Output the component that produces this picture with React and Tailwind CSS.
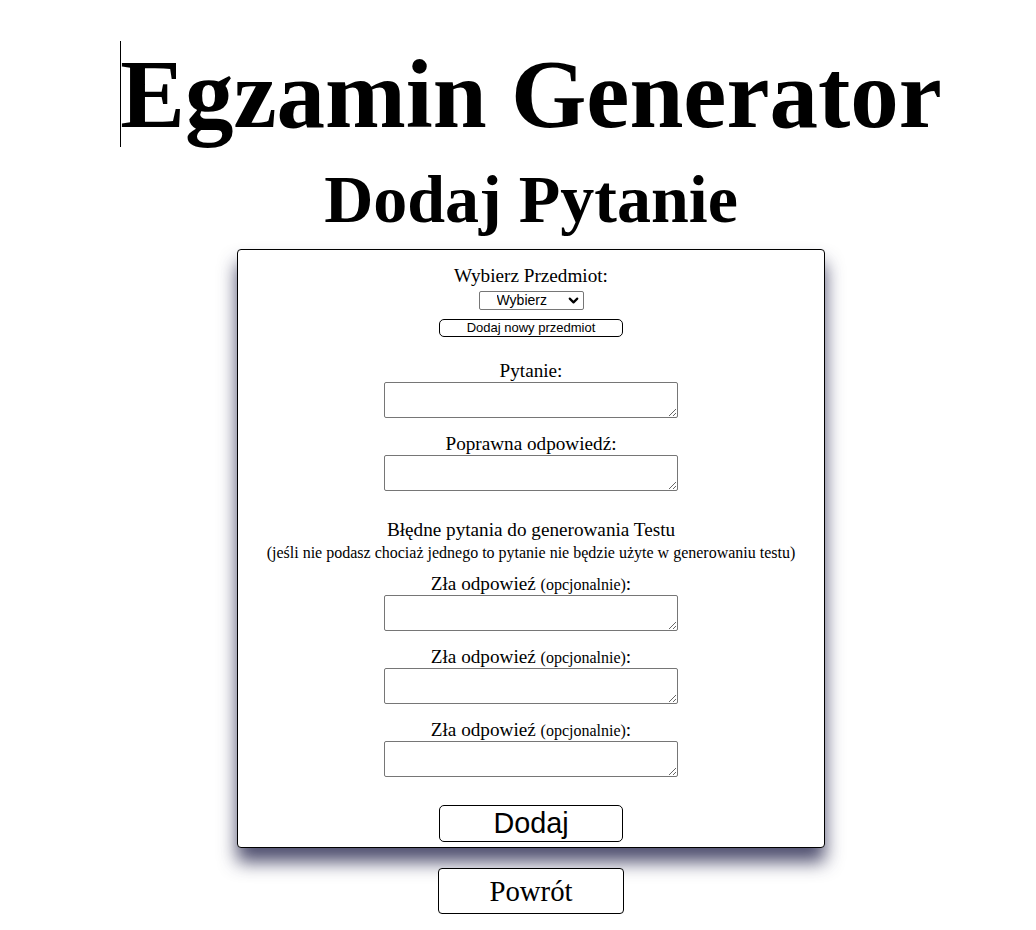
import React from 'react'
import { ChevronDown } from 'lucide-react'

const serif = "font-['Liberation_Serif','Times_New_Roman',serif]"
const sans = "font-['Liberation_Sans',Arial,sans-serif]"

const AnswerField = ({ label, small, first }) => (
  <>
    <label className={`${first ? 'mt-[11px]' : 'mt-[15px]'} h-[22px] text-[19.2px] leading-[22px]`}>
      {label}
      {small && <small className="text-[16px] leading-none">{small}</small>}
      {small && ':'}
    </label>
    <textarea className="block w-[294px] h-[36px] border border-[#767676] rounded-[2px] bg-white" />
  </>
)

const App = () => {
  return (
    <div className={`min-h-screen w-full bg-white text-black pl-[26px] flex flex-col items-center ${serif}`}>
      <h1 className="mt-[40px] text-[97px] font-bold leading-[110px]">
        <span className="relative">
          <span className="absolute left-0 top-0 w-px h-[106px] bg-black"></span>
          Egzamin Generator
        </span>
      </h1>
      <h2 className="mt-[10px] text-[68px] font-bold leading-[78px]">Dodaj Pytanie</h2>

      <div className="mt-[11px] w-[588px] border border-black rounded-[4px] bg-white pt-[15px] pb-[5px] flex flex-col items-center shadow-[0_14px_18px_rgba(35,35,75,0.8)]">
        <label className="h-[22px] text-[19.2px] leading-[22px]">Wybierz Przedmiot:</label>
        <div className="relative mt-[4px] h-[19px]">
          <select className={`block appearance-none w-[105px] h-[19px] border border-[#767676] rounded-[2px] bg-white pl-[17px] text-[14px] leading-[17px] ${sans}`}>
            <option>Wybierz</option>
          </select>
          <ChevronDown className="absolute right-[3px] top-[2px] pointer-events-none" size={15} strokeWidth={3.5} />
        </div>
        <button className={`block mt-[9px] w-[184px] h-[18px] border border-black rounded-[5px] bg-white text-[13px] leading-[16px] ${sans}`}>
          Dodaj nowy przedmiot
        </button>

        <label className="mt-[23px] h-[22px] text-[19.2px] leading-[22px]">Pytanie:</label>
        <textarea className="block w-[294px] h-[36px] border border-[#767676] rounded-[2px] bg-white" />

        <label className="mt-[15px] h-[22px] text-[19.2px] leading-[22px]">Poprawna odpowiedź:</label>
        <textarea className="block w-[294px] h-[36px] border border-[#767676] rounded-[2px] bg-white" />

        <p className="mt-[28px] h-[22px] text-[19.2px] leading-[22px]">Błędne pytania do generowania Testu</p>
        <p className="mt-[3px] h-[18px] text-[16px] leading-[18px]">
          (jeśli nie podasz chociaż jednego to pytanie nie będzie użyte w generowaniu testu)
        </p>

        <AnswerField label="Zła odpowieź " small="(opcjonalnie)" first />
        <AnswerField label="Zła odpowieź " small="(opcjonalnie)" />
        <AnswerField label="Zła odpowieź " small="(opcjonalnie)" />

        <button className={`block mt-[28px] w-[184px] h-[37px] border border-black rounded-[5px] bg-white text-[28.8px] leading-[33px] ${sans}`}>
          Dodaj
        </button>
      </div>

      <button className="block mt-[20px] mb-[16px] w-[186px] h-[46px] border border-black rounded-[4px] bg-white text-[28.8px] leading-[33px]">
        Powrót
      </button>
    </div>
  )
}

export default App
